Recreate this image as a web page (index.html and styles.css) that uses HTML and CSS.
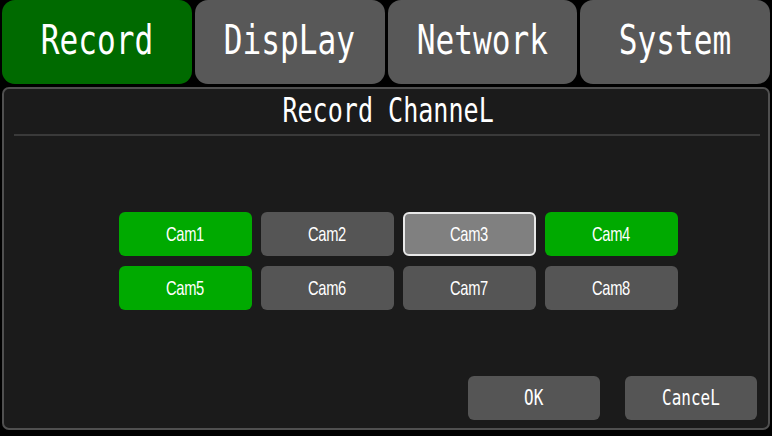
FILE: index.html
```html
<!DOCTYPE html>
<html>
<head>
<meta charset="utf-8">
<link rel="stylesheet" href="styles.css">
</head>
<body>
<div class="screen">
  <nav class="tabs">
    <div class="tab active"><span class="mono">Record</span></div>
    <div class="tab"><span class="mono">DispLay</span></div>
    <div class="tab"><span class="mono">Network</span></div>
    <div class="tab"><span class="mono">System</span></div>
  </nav>
  <section class="panel">
    <h1 class="title"><span class="mono">Record ChanneL</span></h1>
    <div class="sep"></div>
    <div class="grid">
      <div class="cam on"><span class="narrow">Cam1</span></div>
      <div class="cam"><span class="narrow">Cam2</span></div>
      <div class="cam focus"><span class="narrow">Cam3</span></div>
      <div class="cam on"><span class="narrow">Cam4</span></div>
      <div class="cam on"><span class="narrow">Cam5</span></div>
      <div class="cam"><span class="narrow">Cam6</span></div>
      <div class="cam"><span class="narrow">Cam7</span></div>
      <div class="cam"><span class="narrow">Cam8</span></div>
    </div>
    <div class="actions">
      <div class="btn"><span class="mono">OK</span></div>
      <div class="btn"><span class="mono">CanceL</span></div>
    </div>
  </section>
</div>
</body>
</html>
```

FILE: styles.css
```css
html, body {
  margin: 0;
  padding: 0;
  background: #000;
  width: 772px;
  height: 436px;
  overflow: hidden;
}
.screen {
  padding: 0 2px;
  color: #fff;
}
.mono {
  display: inline-block;
  font-family: "DejaVu Sans Mono", monospace;
  transform: scaleX(0.76);
  white-space: pre;
}
.narrow {
  display: inline-block;
  font-family: "Liberation Sans", Arial, sans-serif;
  transform: scaleX(0.7);
  letter-spacing: -0.5px;
}
.tabs {
  display: flex;
  gap: 3px;
  height: 84px;
}
.tab {
  width: 190px;
  background: #585858;
  border-radius: 13px;
  display: flex;
  align-items: center;
  justify-content: center;
  font-size: 41px;
  padding-bottom: 4px;
  box-sizing: border-box;
}
.tab.active {
  background: #006a00;
}
.panel {
  margin-top: 3px;
  height: 343px;
  box-sizing: border-box;
  border: 2px solid #505050;
  border-radius: 7px;
  background: #1b1b1b;
  display: flex;
  flex-direction: column;
}
.title {
  margin: 0;
  height: 45px;
  font-size: 33px;
  font-weight: normal;
  display: flex;
  align-items: center;
  justify-content: center;
  padding-left: 4px;
  padding-bottom: 2px;
  box-sizing: border-box;
}
.sep {
  margin: 0 8px 0 10px;
  height: 2px;
  background: #3a3a3a;
}
.grid {
  margin-top: 76px;
  margin-left: 115px;
  display: grid;
  grid-template-columns: repeat(4, 133px);
  grid-auto-rows: 44px;
  column-gap: 9px;
  row-gap: 10px;
}
.cam {
  background: #555555;
  border-radius: 6px;
  display: flex;
  align-items: center;
  justify-content: center;
  font-size: 21px;
  box-sizing: border-box;
}
.cam.on {
  background: #00aa00;
}
.cam.focus {
  background: #808080;
  border: 2px solid #e8e8e8;
}
.actions {
  margin-top: 66px;
  display: flex;
  justify-content: flex-end;
  gap: 25px;
  padding-right: 11px;
}
.btn {
  width: 132px;
  height: 44px;
  background: #555555;
  border-radius: 6px;
  display: flex;
  align-items: center;
  justify-content: center;
  font-size: 21px;
}
```
